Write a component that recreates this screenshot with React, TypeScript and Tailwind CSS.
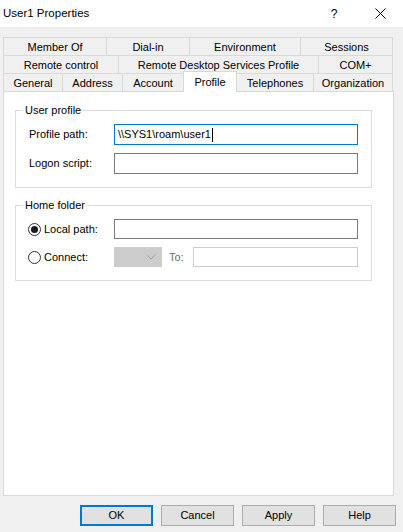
const tabRows = [
  [
    { label: "Member Of", cls: "w-[103px]" },
    { label: "Dial-in", cls: "w-[83px]" },
    { label: "Environment", cls: "w-[111px]" },
    { label: "Sessions", cls: "w-[93px] border-r" },
  ],
  [
    { label: "Remote control", cls: "w-[115px]" },
    { label: "Remote Desktop Services Profile", cls: "w-[200px]" },
    { label: "COM+", cls: "w-[75px] border-r" },
  ],
];

const bottomTabs = [
  { label: "General", cls: "w-[59px] border-l" },
  { label: "Address", cls: "w-[60px] border-l" },
  { label: "Account", cls: "w-[61px] border-l" },
  { label: "Profile", cls: "w-[54px] border-l border-r h-[21px] -mb-[1px] bg-white relative z-10", active: true },
  { label: "Telephones", cls: "w-[76px]" },
  { label: "Organization", cls: "w-[80px] border-l border-r" },
];

function Radio({ checked }: { checked?: boolean }) {
  return (
    <span className="w-[13px] h-[13px] rounded-full border border-[#333333] bg-white flex items-center justify-center shrink-0">
      {checked && <span className="w-[7px] h-[7px] rounded-full bg-[#1a1a1a]" />}
    </span>
  );
}

function Group({ title, children }: { title: string; children: React.ReactNode }) {
  return (
    <fieldset className="w-[357px] border border-[#dcdcdc]">
      <legend className="ml-[7px] px-[2px] leading-[14px]">{title}</legend>
      <div className="pt-[7px] pl-[13px] pr-[13px] pb-[13px] flex flex-col gap-[8px]">{children}</div>
    </fieldset>
  );
}

export default function App() {
  return (
    <div className="w-[403px] h-[532px] bg-[#f0f0f0] flex flex-col text-[11px] text-black font-['Liberation_Sans',Arial,sans-serif] overflow-hidden">
      <div className="h-[27px] bg-white flex items-center shrink-0">
        <span className="pl-[3px] text-[11.5px] flex-1">User1 Properties</span>
        <span className="w-[46px] text-center text-[12px]">?</span>
        <span className="w-[46px] flex items-center justify-center">
          <svg width="11" height="11" viewBox="0 0 11 11">
            <path d="M0.5 0.5 L10.5 10.5 M10.5 0.5 L0.5 10.5" stroke="#000" strokeWidth="1" />
          </svg>
        </span>
      </div>

      <div className="pt-[10px] pl-[3px] shrink-0">
        {tabRows.map((row, i) => (
          <div key={i} className="flex h-[18px]">
            {row.map((t) => (
              <div key={t.label} className={`flex items-center justify-center pt-[1px] border-t border-l border-[#d9d9d9] ${t.cls}`}>
                {t.label}
              </div>
            ))}
          </div>
        ))}
        <div className="flex items-end h-[18px]">
          {bottomTabs.map((t) => (
            <div
              key={t.label}
              className={`flex items-center justify-center pt-[1px] border-t border-[#d9d9d9] ${t.active ? "" : "h-[18px]"} ${t.cls}`}
            >
              {t.label}
            </div>
          ))}
        </div>
      </div>

      <div className="ml-[3px] w-[391px] flex-1 bg-white border border-[#d9d9d9] px-[11px] pt-[11px] flex flex-col gap-[10px]">
        <Group title="User profile">
          <div className="flex items-center">
            <span className="w-[85px]">Profile path:</span>
            <div className="w-[244px] h-[21px] border border-[#0078d7] flex items-center pl-[3px]">
              <span>{"\\\\SYS1\\roam\\user1"}</span>
              <span className="w-px h-[14px] bg-black ml-[1px]" />
            </div>
          </div>
          <div className="flex items-center">
            <span className="w-[85px]">Logon script:</span>
            <div className="w-[244px] h-[21px] border border-[#7a7a7a]" />
          </div>
        </Group>

        <Group title="Home folder">
          <div className="flex items-center">
            <span className="w-[86px] flex items-center gap-[3px] -ml-[1px]">
              <Radio checked />
              Local path:
            </span>
            <div className="w-[244px] h-[20px] border border-[#7a7a7a]" />
          </div>
          <div className="flex items-center">
            <span className="w-[86px] flex items-center gap-[3px] -ml-[1px]">
              <Radio />
              Connect:
            </span>
            <div className="w-[48px] h-[20px] bg-[#cccccc] border border-[#cccccc] flex items-center justify-end pr-[6px]">
              <svg width="8" height="5" viewBox="0 0 8 5">
                <path d="M0.5 0.5 L4 4 L7.5 0.5" fill="none" stroke="#a0a0a0" strokeWidth="1" />
              </svg>
            </div>
            <span className="w-[31px] pl-[7px] text-[#6d6d6d]">To:</span>
            <div className="w-[165px] h-[20px] border border-[#cccccc]" />
          </div>
        </Group>
      </div>

      <div className="h-[36px] shrink-0 flex justify-end items-start pt-[9px] pr-[7px] gap-[8px]">
        <button className="w-[73px] h-[21px] bg-[#e1e1e1] border-2 border-[#0078d7]">OK</button>
        <button className="w-[73px] h-[21px] bg-[#e1e1e1] border border-[#adadad]">Cancel</button>
        <button className="w-[73px] h-[21px] bg-[#e1e1e1] border border-[#adadad]">Apply</button>
        <button className="w-[73px] h-[21px] bg-[#e1e1e1] border border-[#adadad]">Help</button>
      </div>
    </div>
  );
}
